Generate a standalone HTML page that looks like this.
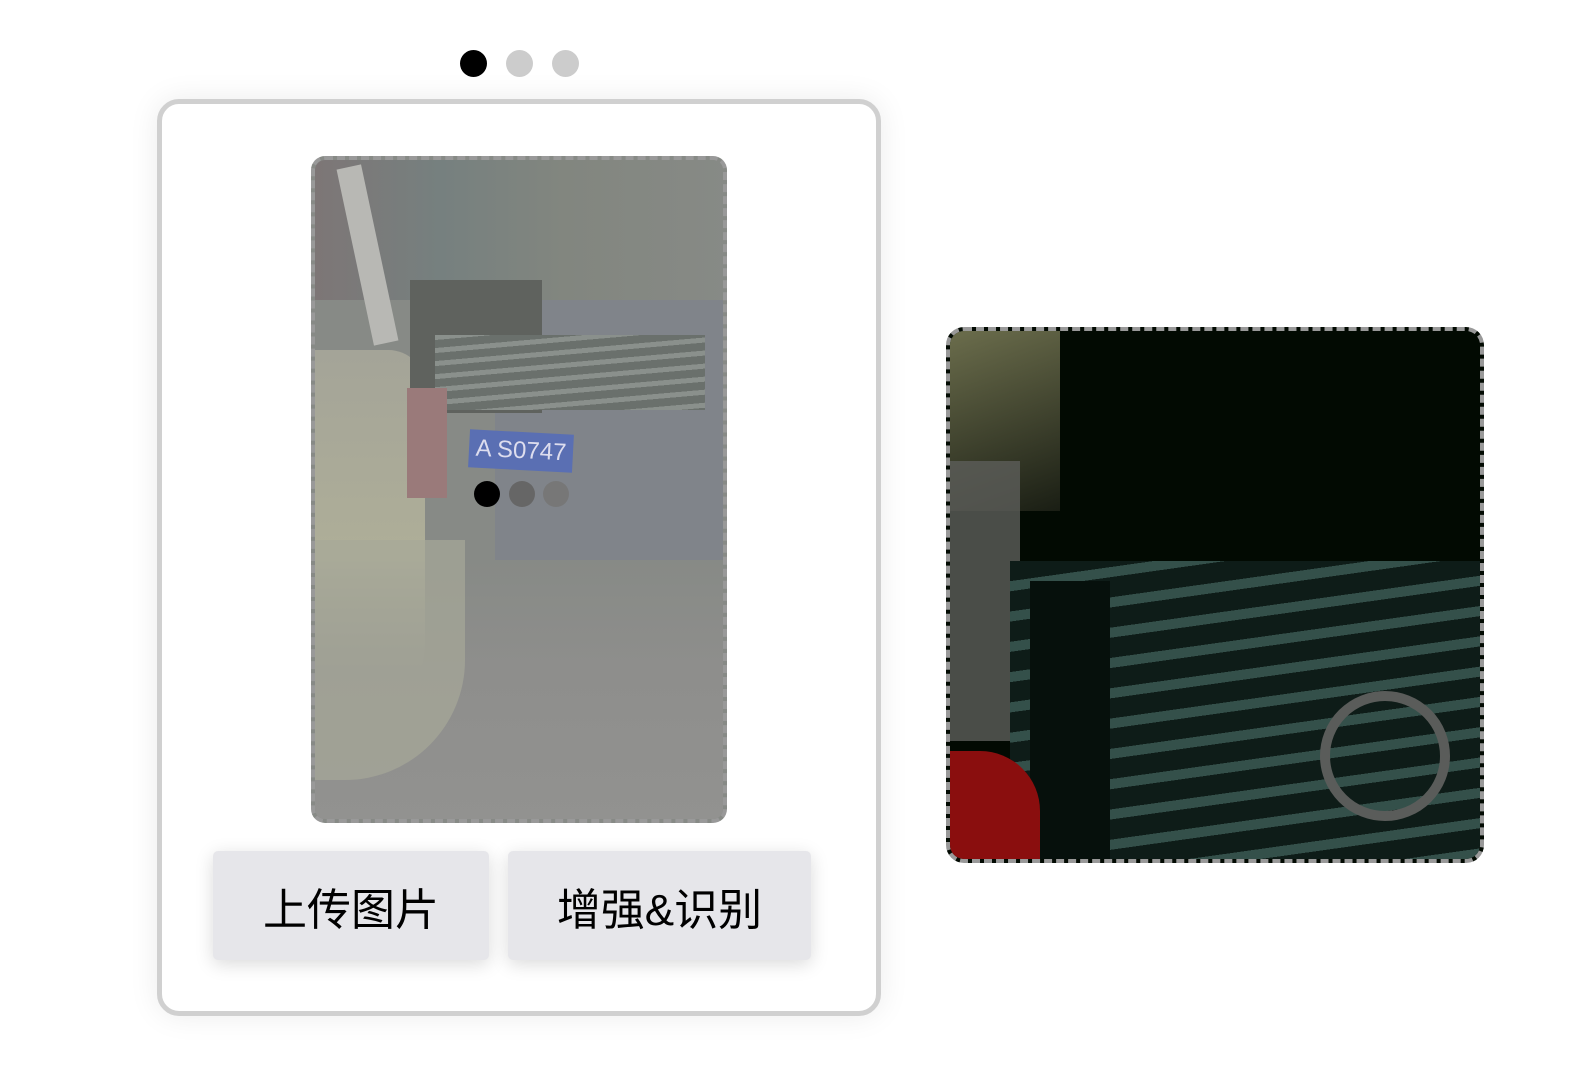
<!DOCTYPE html>
<html><head><meta charset="utf-8"><style>
*{margin:0;padding:0;box-sizing:border-box}
body{width:1583px;height:1086px;background:#fff;position:relative;overflow:hidden;font-family:"Liberation Sans","Noto Sans CJK SC",sans-serif}
.dot{position:absolute;width:27px;height:27px;border-radius:50%;top:50px}
.card{position:absolute;left:157px;top:99px;width:724px;height:917px;border:5px solid #d0d0d0;border-radius:22px;background:#fff;box-shadow:0 0 30px rgba(0,0,0,.08)}
.img{position:absolute;left:311px;top:156px;width:416px;height:667px;border:4px dashed #999;border-radius:14px;overflow:hidden;background:#878a86}
.btn{position:absolute;top:851px;height:109px;background:#e6e6ea;border-radius:5px;box-shadow:0 4px 18px rgba(0,0,0,.15);font-size:44px;color:#000;display:flex;align-items:center;justify-content:center}
.r{position:absolute;left:946px;top:327px;width:538px;height:536px;border:4px dashed #999;border-radius:18px;overflow:hidden;background:#020a02}
.a{position:absolute}
</style></head><body>
<div class="dot" style="left:460px;background:#000"></div>
<div class="dot" style="left:506px;background:#ccc"></div>
<div class="dot" style="left:552px;background:#ccc"></div>
<div class="card"></div>
<div class="img">
 <div class="a" style="left:0;top:0;width:416px;height:140px;background:linear-gradient(90deg,#7d7676,#76807f 30%,#82867f 60%,#878a86)"></div>
 <div class="a" style="left:180px;top:140px;width:236px;height:260px;background:#80848a"></div>
 <div class="a" style="left:0;top:190px;width:110px;height:400px;background:linear-gradient(180deg,#a4a498,#aeae98 50%,#9a9c8e);border-radius:0 40px 120px 0"></div>
 <div class="a" style="left:40px;top:5px;width:25px;height:180px;background:#b8b8b4;transform:rotate(-12deg)"></div>
 <div class="a" style="left:95px;top:120px;width:132px;height:133px;background:#5f625e"></div>
 <div class="a" style="left:120px;top:175px;width:270px;height:75px;background:repeating-linear-gradient(175deg,#8a908c 0 5px,#6a706c 5px 13px)"></div>
 <div class="a" style="left:92px;top:228px;width:40px;height:110px;background:#9a7a7a"></div>
 <div class="a" style="left:154px;top:272px;width:104px;height:38px;background:#5a6fb3;color:#dde;font-size:24px;line-height:38px;white-space:nowrap;overflow:hidden;transform:rotate(3deg)">&nbsp;A S0747</div>
 <div class="a" style="left:0;top:400px;width:416px;height:270px;background:linear-gradient(180deg,rgba(140,140,136,0),#8e8e8c 40%,#929290)"></div>
 <div class="a" style="left:0;top:380px;width:150px;height:240px;background:#a7a898;border-radius:0 0 120px 0;opacity:.7"></div>
 <div class="a" style="left:159px;top:321px;width:26px;height:26px;border-radius:50%;background:#000"></div>
 <div class="a" style="left:194px;top:321px;width:26px;height:26px;border-radius:50%;background:#666"></div>
 <div class="a" style="left:228px;top:321px;width:26px;height:26px;border-radius:50%;background:#777"></div>
</div>
<div class="btn" style="left:213px;width:276px">上传图片</div>
<div class="btn" style="left:508px;width:303px">增强&amp;识别</div>
<div class="r">
 <div class="a" style="left:0;top:0;width:110px;height:180px;background:linear-gradient(160deg,#6b6d4c,#1a1e14)"></div>
 <div class="a" style="left:0;top:130px;width:70px;height:280px;background:#5c5e5a;opacity:.8"></div>
 <div class="a" style="left:60px;top:230px;width:480px;height:300px;background:repeating-linear-gradient(172deg,#0e1c18 0 20px,#34504a 20px 30px)"></div>
 <div class="a" style="left:80px;top:250px;width:80px;height:280px;background:#06100c"></div>
 <div class="a" style="left:370px;top:360px;width:130px;height:130px;border:10px solid #5a5c5a;border-radius:50%"></div>
 <div class="a" style="left:0;top:420px;width:90px;height:120px;background:#8a0e0e;border-radius:0 60px 0 0"></div>
</div>
</body></html>
